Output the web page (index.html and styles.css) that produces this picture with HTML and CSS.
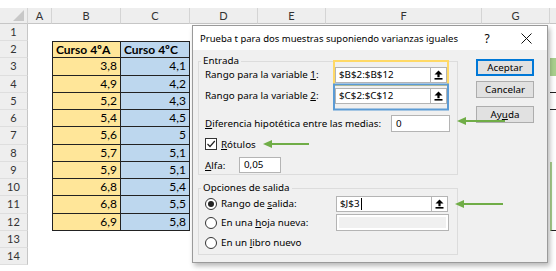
FILE: index.html
```html
<!DOCTYPE html>
<html lang="es">
<head>
    <meta charset="UTF-8">
    <title>Prueba t</title>
    <link rel="stylesheet" href="styles.css">
</head>
<body>
    <div class="sheet">
        <div class="row head">
            <div class="corner"><span class="tri"></span></div>
            <div class="ch">A</div><div class="ch">B</div><div class="ch">C</div><div class="ch">D</div>
            <div class="ch">E</div><div class="ch">F</div><div class="ch">G</div><div class="ch"></div>
        </div>
        <div class="row"><div class="rh">1</div></div>
        <div class="row"><div class="rh">2</div><div class="cell b top title">Curso 4ºA</div><div class="cell c top title">Curso 4ºC</div></div>
        <div class="row tall"><div class="rh">3</div><div class="cell b">3,8</div><div class="cell c">4,1</div><div class="hcol green"></div></div>
        <div class="row"><div class="rh">4</div><div class="cell b">4,9</div><div class="cell c">4,2</div><div class="hcol line"></div></div>
        <div class="row"><div class="rh">5</div><div class="cell b">5,2</div><div class="cell c">4,3</div><div class="hcol line"></div></div>
        <div class="row"><div class="rh">6</div><div class="cell b">5,4</div><div class="cell c">4,5</div></div>
        <div class="row tall"><div class="rh">7</div><div class="cell b">5,6</div><div class="cell c">5</div></div>
        <div class="row"><div class="rh">8</div><div class="cell b">5,7</div><div class="cell c">5,1</div></div>
        <div class="row"><div class="rh">9</div><div class="cell b">5,9</div><div class="cell c">5,1</div><div class="hcol edge"></div></div>
        <div class="row"><div class="rh">10</div><div class="cell b">6,8</div><div class="cell c">5,4</div><div class="hcol edge"></div></div>
        <div class="row tall"><div class="rh">11</div><div class="cell b">6,8</div><div class="cell c">5,5</div><div class="hcol edge"></div></div>
        <div class="row"><div class="rh">12</div><div class="cell b">6,9</div><div class="cell c">5,8</div><div class="hcol edge line"></div></div>
        <div class="row"><div class="rh">13</div></div>
        <div class="row"><div class="rh">14</div></div>
    </div>

    <div class="dialog">
        <div class="dlg-title">
            <span class="caption">Prueba t para dos muestras suponiendo varianzas iguales</span>
            <span class="help">?</span>
            <span class="close">
                <svg width="11" height="11" viewBox="0 0 11 11"><path d="M0.5 0.5 L10.5 10.5 M10.5 0.5 L0.5 10.5" stroke="#111" stroke-width="1"/></svg>
            </span>
        </div>
        <div class="dlg-body">
            <div class="dlg-main">
                <fieldset class="group entrada">
                    <legend>Entrada</legend>
                    <div class="field f1">
                        <span class="lbl wide">Rango para la variable <u>1</u>:</span>
                        <div class="refedit"><span class="val">$B$2:$B$12</span><span class="pick"><svg width="9" height="10" viewBox="0 0 9 10"><path d="M4.5 0.5 L8.5 4.5 L5.6 4.5 L5.6 7.2 L3.4 7.2 L3.4 4.5 L0.5 4.5 Z" fill="#000"/><rect x="0.5" y="8" width="8" height="1.6" fill="#000"/></svg></span></div>
                    </div>
                    <div class="field f2">
                        <span class="lbl wide">Rango para la variable <u>2</u>:</span>
                        <div class="refedit"><span class="val">$C$2:$C$12</span><span class="pick"><svg width="9" height="10" viewBox="0 0 9 10"><path d="M4.5 0.5 L8.5 4.5 L5.6 4.5 L5.6 7.2 L3.4 7.2 L3.4 4.5 L0.5 4.5 Z" fill="#000"/><rect x="0.5" y="8" width="8" height="1.6" fill="#000"/></svg></span></div>
                    </div>
                    <div class="field f3">
                        <span class="lbl diff"><u>D</u>iferencia hipotética entre las medias:</span>
                        <div class="textbox medias">0</div>
                    </div>
                    <div class="field f4">
                        <span class="check"><svg width="10" height="10" viewBox="0 0 10 10"><path d="M1.5 5 L4 7.5 L8.8 2" fill="none" stroke="#222" stroke-width="1.2"/></svg></span>
                        <span class="lbl"><u>R</u>ótulos</span>
                    </div>
                    <div class="field f5">
                        <span class="lbl alfa"><u>A</u>lfa:</span>
                        <div class="textbox alfa-box">0,05</div>
                    </div>
                </fieldset>

                <fieldset class="group salida">
                    <legend>Opciones de salida</legend>
                    <div class="field r1">
                        <span class="radio on"></span>
                        <span class="lbl opt">Rango de <u>s</u>alida:</span>
                        <div class="refedit"><span class="val">$J$3<i class="caret"></i></span><span class="pick"><svg width="9" height="10" viewBox="0 0 9 10"><path d="M4.5 0.5 L8.5 4.5 L5.6 4.5 L5.6 7.2 L3.4 7.2 L3.4 4.5 L0.5 4.5 Z" fill="#000"/><rect x="0.5" y="8" width="8" height="1.6" fill="#000"/></svg></span></div>
                    </div>
                    <div class="field r2">
                        <span class="radio"></span>
                        <span class="lbl opt">En una <u>h</u>oja nueva:</span>
                        <div class="textbox disabled"></div>
                    </div>
                    <div class="field r3">
                        <span class="radio"></span>
                        <span class="lbl">En un <u>l</u>ibro nuevo</span>
                    </div>
                </fieldset>
            </div>

            <div class="dlg-buttons">
                <div class="btn default">Aceptar</div>
                <div class="btn">Cancelar</div>
                <div class="btn help-btn">Ay<u>u</u>da</div>
            </div>
        </div>
    </div>

    <!-- highlight boxes and arrows drawn over the dialog -->
    <svg class="marks" width="556" height="271" viewBox="0 0 556 271">
        <rect x="334" y="61" width="114" height="24" fill="none" stroke="#ffd966" stroke-width="2"/>
        <rect x="334" y="84.5" width="114" height="25" fill="none" stroke="#5b9bd5" stroke-width="2"/>
        <g stroke="#70ad47" stroke-width="2" fill="#70ad47">
            <line x1="464" y1="121" x2="505" y2="121"/>
            <path d="M457 121 L466 117 L466 125 Z" stroke="none"/>
            <line x1="271" y1="144" x2="309" y2="144"/>
            <path d="M263 144 L272 140 L272 148 Z" stroke="none"/>
            <line x1="463" y1="204" x2="503" y2="204"/>
            <path d="M455 204 L464 200 L464 208 Z" stroke="none"/>
        </g>
    </svg>
</body>
</html>
```

FILE: styles.css
```css
body {
    margin: 0;
    padding-top: 8px;
    width: 556px;
    height: 271px;
    overflow: hidden;
    position: relative;
    background: #fff;
    font-family: 'Lato', sans-serif;
}

/* spreadsheet */
.row {
    display: grid;
    grid-template-columns: 28px 24px 69px 69px 68px 68px 156px 68px 30px;
    height: 17px;
}

.row.tall {
    height: 18px;
}

.row.head {
    height: 16px;
}

.corner,
.ch {
    background: #eeeeee;
    border-right: 1px solid #d4d4d4;
    border-bottom: 1px solid #c6c6c6;
    box-sizing: border-box;
    font-size: 11px;
    color: #333;
    text-align: center;
    line-height: 15px;
}

.corner {
    position: relative;
}

.tri {
    position: absolute;
    right: 3px;
    bottom: 2px;
    width: 0;
    height: 0;
    border-left: 11px solid transparent;
    border-bottom: 11px solid #c8c8c8;
}

.rh {
    grid-column: 1;
    background: #eeeeee;
    border-right: 1px solid #c6c6c6;
    border-bottom: 1px solid #dedede;
    box-sizing: border-box;
    font-size: 11px;
    color: #333;
    text-align: center;
    line-height: 16px;
}

.cell {
    box-sizing: border-box;
    border-right: 1px solid #222;
    border-bottom: 1px solid #222;
    font-size: 12px;
    line-height: 16px;
    text-align: right;
    padding-right: 3px;
    color: #000;
}

.cell.b {
    grid-column: 3;
    background: #ffe699;
    border-left: 1px solid #222;
}

.cell.c {
    grid-column: 4;
    background: #bdd7ee;
}

.cell.top {
    border-top: 1px solid #222;
    line-height: 15px;
}

.cell.title {
    text-align: left;
    padding-left: 3px;
    font-weight: bold;
}

.hcol {
    grid-column: 9;
    box-sizing: border-box;
}

.hcol.green {
    background: #a9d08e;
}

.hcol.line {
    border-bottom: 1px solid #222;
}

.hcol.edge {
    border-left: 2px solid #a9d08e;
}

/* dialog */
.dialog {
    position: absolute;
    left: 192px;
    top: 25px;
    width: 356px;
    height: 238px;
    box-sizing: border-box;
    border: 1px solid #9a9a9a;
    background: #f0f0f0;
    box-shadow: 2px 3px 5px rgba(0, 0, 0, 0.28);
    font-family: 'Noto Sans', sans-serif;
    font-size: 9.8px;
    color: #000;
}

.dlg-title {
    height: 24px;
    background: #fff;
    display: flex;
    align-items: center;
    padding-left: 7px;
    font-size: 9.5px;
    white-space: nowrap;
}

.caption {
    flex: 1;
}

.help {
    width: 36px;
    text-align: center;
    font-size: 12px;
}

.close {
    width: 42px;
    display: flex;
    justify-content: center;
}

.dlg-body {
    display: flex;
    padding: 5px 0 0 5px;
}

.dlg-main {
    width: 260px;
}

.group {
    margin: 0;
    padding: 0 0 1px 0;
    border: 1px solid #dcdcdc;
    min-width: 0;
}

.group legend {
    margin-left: 2px;
    padding: 0 2px;
    line-height: 12px;
}

.field {
    display: flex;
    align-items: center;
    padding-left: 6px;
    white-space: nowrap;
}

.f1 { height: 15px; margin-top: 0; }
.f2 { height: 15px; margin-top: 6px; }
.f3 { height: 17px; margin-top: 12px; }
.f4 { height: 12px; margin-top: 6px; }
.f5 { height: 16px; margin-top: 7px; }

.lbl.wide {
    width: 130px;
}

.lbl.diff {
    width: 186px;
}

.lbl.alfa {
    width: 34px;
}

.lbl.opt {
    width: 115px;
}

.refedit {
    width: 112px;
    height: 16px;
    box-sizing: border-box;
    border: 1px solid #b4b4b4;
    background: #fff;
    display: flex;
}

.refedit .val {
    flex: 1;
    padding-left: 3px;
    line-height: 14px;
    display: flex;
    align-items: center;
}

.caret {
    display: inline-block;
    width: 1px;
    height: 12px;
    background: #000;
    margin-left: 1px;
}

.pick {
    width: 16px;
    box-sizing: border-box;
    border-left: 1px solid #b4b4b4;
    display: flex;
    align-items: center;
    justify-content: center;
}

.textbox {
    height: 17px;
    box-sizing: border-box;
    border: 1px solid #b4b4b4;
    background: #fff;
    padding-left: 4px;
    line-height: 15px;
}

.medias {
    width: 59px;
}

.alfa-box {
    width: 42px;
    height: 16px;
    line-height: 14px;
}

.textbox.disabled {
    width: 113px;
    background: #f0f0f0;
    box-shadow: inset 0 0 0 2px #fff;
}

.check {
    width: 12px;
    height: 12px;
    box-sizing: border-box;
    border: 1px solid #333;
    background: #fff;
    margin-right: 4px;
    display: flex;
    align-items: center;
    justify-content: center;
}

.salida {
    margin-top: 7px;
    padding-bottom: 3px;
}

.r1 { height: 17px; margin-top: 1px; }
.r2 { height: 17px; margin-top: 2px; }
.r3 { height: 17px; margin-top: 3px; }

.radio {
    width: 12px;
    height: 12px;
    box-sizing: border-box;
    border: 1px solid #333;
    border-radius: 50%;
    background: #fff;
    margin-right: 4px;
    display: flex;
    align-items: center;
    justify-content: center;
}

.radio.on::after {
    content: '';
    width: 6px;
    height: 6px;
    border-radius: 50%;
    background: #222;
}

.dlg-buttons {
    margin-left: 18px;
    margin-top: 4px;
    width: 58px;
    display: flex;
    flex-direction: column;
}

.btn {
    height: 17px;
    box-sizing: border-box;
    border: 1px solid #adadad;
    background: #e1e1e1;
    text-align: center;
    line-height: 15px;
    margin-bottom: 5px;
}

.btn.default {
    border: 2px solid #0078d7;
    line-height: 13px;
}

.btn.help-btn {
    margin-top: 3px;
}

.marks {
    position: absolute;
    left: 0;
    top: 0;
}
```
